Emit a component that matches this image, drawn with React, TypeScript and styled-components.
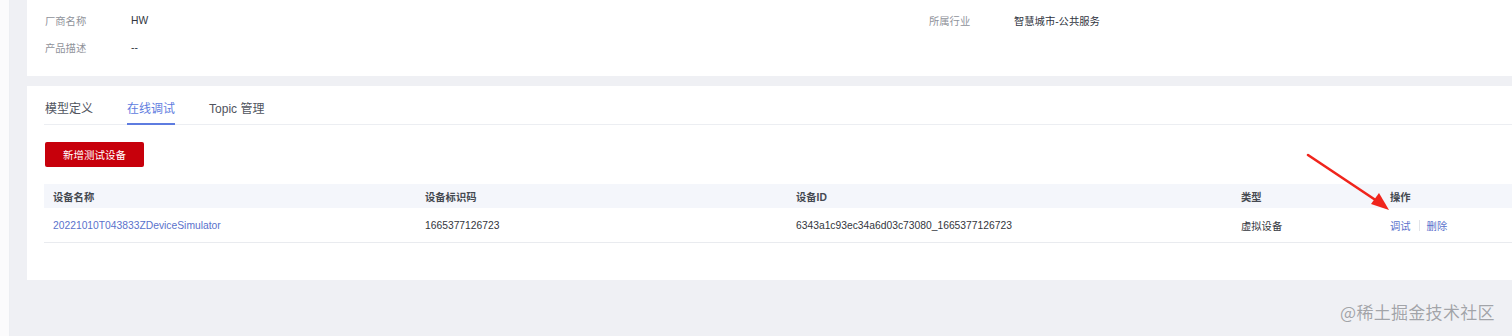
import React from "react";
import styled, { createGlobalStyle } from "styled-components";

const Global = createGlobalStyle`
  html, body { margin: 0; padding: 0; background: #eff0f4; }
  body { font-family: "Liberation Sans", "Noto Sans CJK SC", sans-serif; overflow: hidden; }
  #root { width: 1512px; height: 336px; overflow: hidden; position: relative; }
`;

const Shell = styled.div`
  display: flex;
  width: 1560px;
  height: 336px;
  background: #eff0f4;
`;

const SideEdge = styled.div`
  width: 9px;
  flex: none;
  background: #fbfbfc;
  border-right: 1px solid #eceef2;
`;

const Main = styled.div`
  flex: 1;
  padding-left: 17px;
  display: flex;
  flex-direction: column;
  gap: 10px;
`;

const Card = styled.div<{ $h: number }>`
  background: #ffffff;
  height: ${(p) => p.$h}px;
  box-sizing: border-box;
  padding: 0 0 0 17px;
`;

const InfoGrid = styled.div`
  display: grid;
  grid-template-columns: 884px 1fr;
  padding-top: 7px;
`;

const InfoItem = styled.div`
  display: flex;
  align-items: center;
  height: 27px;
  font-size: 10.3px;
`;

const Label = styled.span<{ $w: number }>`
  color: #8f929a;
  width: ${(p) => p.$w}px;
  flex: none;
  padding-left: 1px;
`;

const Value = styled.span`
  color: #2f3440;
`;

const Tabs = styled.div`
  display: flex;
  gap: 34px;
  height: 39px;
  box-sizing: border-box;
  border-bottom: 1px solid #eceef2;
  padding-top: 15px;
  padding-left: 1px;
`;

const Tab = styled.div<{ $active?: boolean }>`
  font-size: 12px;
  color: ${(p) => (p.$active ? "#5e7ce0" : "#50545e")};
  height: 24px;
  box-sizing: border-box;
  border-bottom: 2px solid ${(p) => (p.$active ? "#5e7ce0" : "transparent")};
  margin-bottom: -1px;
  line-height: 17px;
`;

const Toolbar = styled.div`
  padding-top: 17px;
  padding-bottom: 17px;
`;

const PrimaryButton = styled.button`
  width: 99px;
  height: 25px;
  border: none;
  border-radius: 2px;
  background: #c7000b;
  color: #ffffff;
  font-family: "Noto Sans CJK SC", sans-serif;
  font-size: 10.5px;
  padding: 0;
  margin-left: 1px;
`;

const TableGrid = styled.div`
  display: grid;
  grid-template-columns: 372px 371px 445px 149px 1fr;
`;

const HeadCell = styled.div`
  background: #f4f6fb;
  height: 24px;
  display: flex;
  align-items: center;
  padding-left: 9px;
  font-size: 10.3px;
  font-weight: 700;
  color: #454951;
`;

const Cell = styled.div`
  height: 35px;
  display: flex;
  align-items: center;
  padding-left: 9px;
  padding-top: 1px;
  font-size: 10.3px;
  color: #33363d;
  border-bottom: 1px solid #e9ebef;
  box-sizing: border-box;
`;

const Link = styled.span`
  color: #5a72cc;
`;

const Divider = styled.span`
  width: 1px;
  height: 11px;
  background: #e2e4e9;
  margin: 0 7px 0 8px;
`;

const Arrow = styled.svg`
  position: absolute;
  left: 1300px;
  top: 148px;
  width: 100px;
  height: 70px;
  pointer-events: none;
`;

const Watermark = styled.div`
  position: absolute;
  left: 1340px;
  top: 299px;
  font-family: "Noto Sans CJK SC", sans-serif;
  font-size: 17px;
  color: #a2a4a9;
  letter-spacing: 0.3px;
  text-shadow: 0 0 1px #fff;
`;

export default function App() {
  return (
    <>
      <Global />
      <Shell>
        <SideEdge />
        <Main>
          <Card $h={76}>
            <InfoGrid>
              <InfoItem>
                <Label $w={86}>厂商名称</Label>
                <Value>HW</Value>
              </InfoItem>
              <InfoItem>
                <Label $w={85}>所属行业</Label>
                <Value>智慧城市-公共服务</Value>
              </InfoItem>
              <InfoItem>
                <Label $w={86}>产品描述</Label>
                <Value>--</Value>
              </InfoItem>
            </InfoGrid>
          </Card>
          <Card $h={194}>
            <Tabs>
              <Tab>模型定义</Tab>
              <Tab $active>在线调试</Tab>
              <Tab>Topic 管理</Tab>
            </Tabs>
            <Toolbar>
              <PrimaryButton>新增测试设备</PrimaryButton>
            </Toolbar>
            <TableGrid>
              <HeadCell>设备名称</HeadCell>
              <HeadCell>设备标识码</HeadCell>
              <HeadCell>设备ID</HeadCell>
              <HeadCell>类型</HeadCell>
              <HeadCell>操作</HeadCell>
              <Cell>
                <Link>20221010T043833ZDeviceSimulator</Link>
              </Cell>
              <Cell>1665377126723</Cell>
              <Cell>6343a1c93ec34a6d03c73080_1665377126723</Cell>
              <Cell>虚拟设备</Cell>
              <Cell>
                <Link>调试</Link>
                <Divider />
                <Link>删除</Link>
              </Cell>
            </TableGrid>
          </Card>
        </Main>
      </Shell>
      <Arrow viewBox="0 0 100 70">
        <line x1="8" y1="7" x2="80" y2="55" stroke="#f0241c" strokeWidth="2.6" strokeLinecap="round" />
        <polygon points="89,62 71,56 79,45" fill="#f0241c" />
      </Arrow>
      <Watermark>@稀土掘金技术社区</Watermark>
    </>
  );
}
